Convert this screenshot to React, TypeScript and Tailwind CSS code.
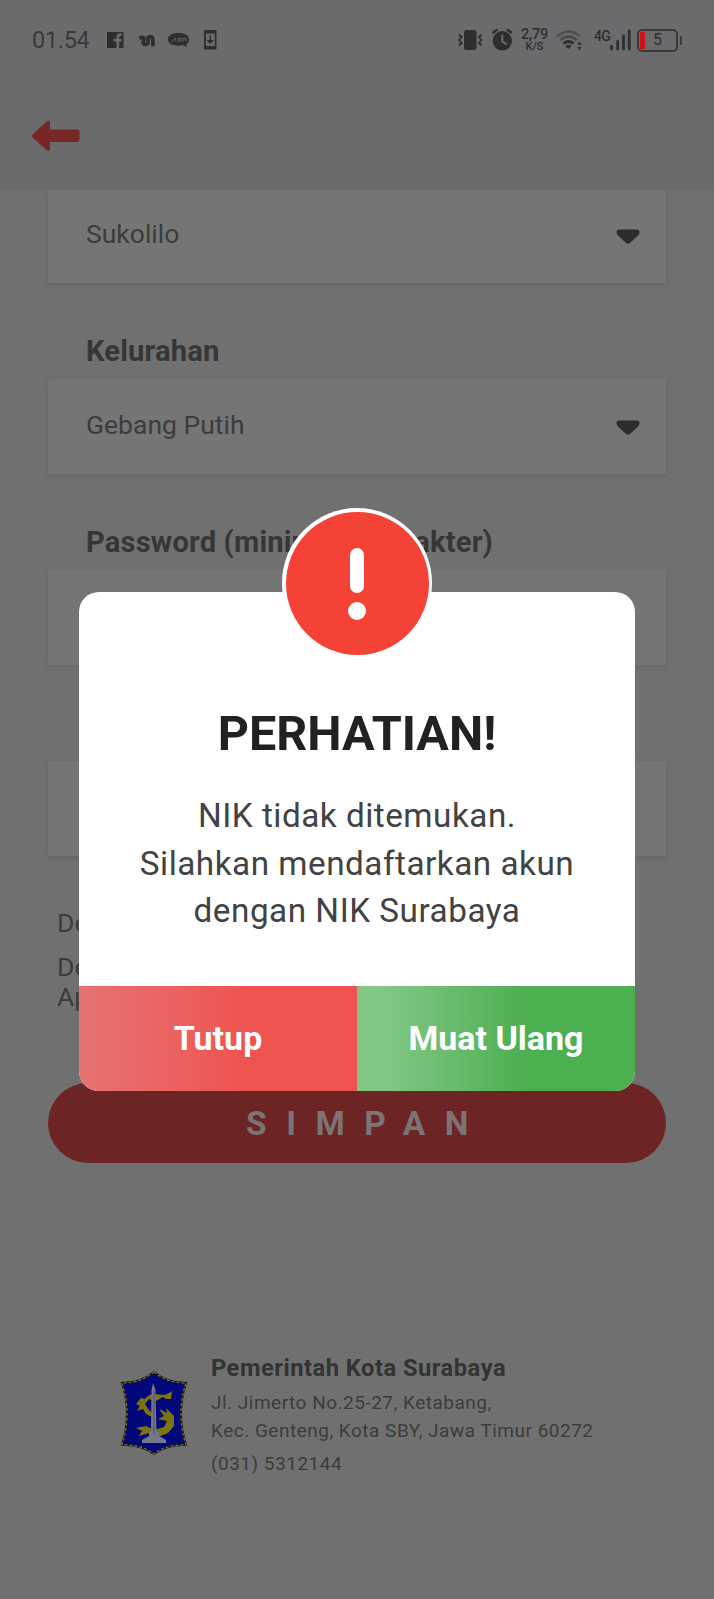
import React from "react";

function StatusBar() {
  return (
    <div className="flex h-[80px] items-center text-[#2e2e30]">
      <span className="ml-[32px] w-[75px] pt-[2px] text-[23.500px] tracking-[-0.300px] text-[#3a3a3c]">01.54</span>
      <svg className="h-[30px] w-[120px]" viewBox="107 25 120 30">
        <rect x="107" y="32" width="16.500" height="16" fill="currentColor" />
        <path d="M116.500 48V41.500H113.500V39H116.500V37Q116.500 33.300 120 33.300H121.500V36H120.500Q119.200 36 119.200 37.500V39H121.500V41.500H119.200V48Z" fill="#6b6b6d" />
        <path d="M139.300 38.300Q145 36 143.700 40Q142.300 44.500 145.200 44.500Q148.500 44.500 148 40.500Q147.500 36.500 150.300 36.500Q153 36.500 152.900 41V46.300" fill="none" stroke="currentColor" strokeWidth="3.700" />
        <path d="M178.500 33C185 33 189 35.500 189 39.500C189 42 188 43.500 186.500 44.200L186.500 47L183 45.300C175 46.500 168 44.500 168 39.500C168 35.500 172 33 178.500 33Z" fill="currentColor" />
        <path d="M172 41.500L175.500 38L176 41.500M178.500 38.500V41.200H181V38.500ZM183 41.500V38.500H186V41.500" fill="none" stroke="#68686b" strokeWidth="1" />
        <rect x="204" y="30" width="12.500" height="19.500" rx="1" fill="currentColor" />
        <rect x="205.800" y="33.500" width="9" height="12.500" fill="#6b6b6d" />
        <path d="M210.300 35V42M208.200 40.800L210.300 43L212.400 40.800Z" stroke="currentColor" strokeWidth="1.400" fill="currentColor" />
      </svg>
      <svg className="ml-[229px] h-[40px] w-[60px]" viewBox="456 20 60 40">
        <rect x="464" y="30" width="12.500" height="20" rx="2.500" fill="currentColor" />
        <path d="M459 34.500L461.500 37L459 40L461.500 43L459 45.500M481.500 34.500L479 37L481.500 40L479 43L481.500 45.500" fill="none" stroke="currentColor" strokeWidth="1.800" />
        <circle cx="502.300" cy="40.800" r="9.700" fill="currentColor" />
        <path d="M492.500 33L497.500 29.500M512 33L507 29.500" stroke="currentColor" strokeWidth="2.400" />
        <path d="M502.300 35V41.500L507 44.500" fill="none" stroke="#6b6b6d" strokeWidth="2" />
      </svg>
      <div className="flex w-[36px] flex-col items-center pr-px pl-[2px] text-center font-medium">
        <span className="text-[14.500px] leading-[13px] tracking-[-0.300px]">2,79</span>
        <span className="text-[11px] leading-[11px]">K/S</span>
      </div>
      <svg className="h-[40px] w-[42px]" viewBox="552 20 42 40" fill="none" stroke="currentColor">
        <path d="M557 36.500Q568.500 26.500 580 36.500" strokeWidth="2.500" opacity="0.45" />
        <path d="M560.500 40Q568.500 33 576.500 40" strokeWidth="2.500" opacity="0.6" />
        <path d="M563.500 43.500Q568.500 39.500 573.500 43.500" strokeWidth="2.800" />
        <path d="M565.300 46L568.500 49L571.700 46Q568.500 43.500 565.300 46Z" fill="currentColor" stroke="none" />
        <path d="M577.500 45L579.500 41.500L581.500 45ZM577.500 47L579.500 50.500L581.500 47Z" fill="currentColor" stroke="none" />
      </svg>
      <span className="mb-[9px] w-[15px] text-[14px] leading-none font-medium tracking-[-0.800px]">4G</span>
      <svg className="h-[40px] w-[24px]" viewBox="609 20 24 40" stroke="currentColor" strokeWidth="2.800" strokeLinecap="round">
        <path d="M611.500 46.500V49M617.700 41.500V49M623.500 36V49M629.200 31V49" />
      </svg>
      <div className="ml-[4px] flex h-[23px] w-[41px] items-center rounded-[5px] border-2 border-[#3a3a3c] pl-px">
        <span className="h-[17px] w-[5px] rounded-[1px] bg-[#cf1216]" />
        <span className="ml-[8px] text-[16px] leading-none">5</span>
      </div>
      <span className="ml-[2px] h-[9px] w-[2px] rounded bg-[#3a3a3c]" />
    </div>
  );
}

function Header() {
  return (
    <header className="relative h-[190px] bg-[#6b6b6d]">
      <StatusBar />
      <svg className="mt-[40px] ml-[32px] h-[32px] w-[48px]" viewBox="0 0 48 32" fill="#792626">
        <path d="M1 14L14.500 1.500Q18 -0.500 18 3V9.500H45Q47.500 9.500 47.500 12V19.500Q47.500 22 45 22H18V28.500Q18 32 14.500 30L1 18Q-1 16 1 14Z" />
      </svg>
    </header>
  );
}

function Caret() {
  return (
    <svg className="mt-[2px] h-[16px] w-[24px]" viewBox="0 0 24 16" fill="#2d2d2d">
      <path d="M3 0.500H21Q23.500 0.500 23.500 3Q23.500 5 22 6.500L14.500 13.500Q12 16 9.500 13.500L2 6.500Q0.500 5 0.500 3Q0.500 0.500 3 0.500Z" />
    </svg>
  );
}

function Field({ value }: { value?: string }) {
  return (
    <div className="flex h-[95px] items-center justify-between bg-[#757575] pr-[26px] pl-[38px] shadow-[0_2px_5px_rgba(0,0,0,0.1)]">
      {value && <span className="pb-[3px] text-[26.500px] text-[#3c3c3c]">{value}</span>}
      {value && <Caret />}
    </div>
  );
}

function Label({ children }: { children?: React.ReactNode }) {
  return (
    <div className="flex h-[96px] items-end pb-[9px] pl-[38px] text-[29.200px] font-bold tracking-[0.150px] text-[#363636]">
      <span className="leading-[37px]">{children}</span>
    </div>
  );
}

function Emblem() {
  return (
    <svg className="h-[86px] w-[68px]" viewBox="0 0 68 86">
      <path d="M34 2Q47 13 66 13Q56 43 66 75Q47 74 34 84Q21 74 2 75Q12 43 2 13Q21 13 34 2Z" fill="#02077c" stroke="#17170f" strokeWidth="2" />
      <path d="M34 2Q47 13 66 13Q56 43 66 75Q47 74 34 84Q21 74 2 75Q12 43 2 13Q21 13 34 2Z" fill="none" stroke="#77733e" strokeWidth="1.200" strokeDasharray="3 2" />
      <path d="M52 21L51 29L46 29L43 27L36 31L29 29L25 34L28 39L32 43V47L26 44L23 39L17 41L20 36L16 34L21 28L25 29L29 25L35 24L45 25L49 23Z" fill="#7d7410" />
      <path d="M39 39L47 43L46 38L54 46L54 56L48 63L38 67L29 63L19 66L22 61L16 58L26 56L34 60L44 57L47 51L38 49L44 46Z" fill="#7d7410" />
      <path d="M33 13L35.500 20L36.500 62H39V66L46 70V73H22V70L29 66V62H31L31.500 20Z" fill="#77778a" />
      <path d="M34 20V64" stroke="#4b4b74" strokeWidth="1" />
    </svg>
  );
}

function Footer() {
  return (
    <footer className="mt-[190px] flex pl-[119.500px] text-[#3c3c3c]">
      <div className="pt-[17px]">
        <Emblem />
      </div>
      <div className="ml-[23.500px] flex flex-col whitespace-nowrap tracking-[0.500px]">
        <span className="text-[23.700px] leading-[30px] font-bold text-[#333]">Pemerintah Kota Surabaya</span>
        <span className="mt-[6px] text-[19px] leading-[28px]">Jl. Jimerto No.25-27, Ketabang,</span>
        <span className="text-[19px] leading-[28px]">Kec. Genteng, Kota SBY, Jawa Timur 60272</span>
        <span className="mt-[5px] text-[19px] leading-[28px]">(031) 5312144</span>
      </div>
    </footer>
  );
}

function AlertDialog() {
  return (
    <div role="dialog" className="absolute top-[592px] left-[79px] h-[499px] w-[556px]">
      <div className="flex h-full flex-col overflow-hidden rounded-[20px] bg-white text-center">
        <h1 className="mt-[113px] text-[48.500px] leading-[58px] font-bold text-[#212121]">PERHATIAN!</h1>
        <p className="mt-[29px] text-[33.300px] leading-[47.500px] tracking-[0.500px] text-[#424242]">
          NIK tidak ditemukan.
          <br />
          Silahkan mendaftarkan akun
          <br />
          dengan NIK Surabaya
        </p>
        <div className="mt-auto grid h-[105px] grid-cols-2 text-[34px] font-bold text-white">
          <button className="bg-linear-to-r from-[#e57373] to-[#ef5350] to-60%">Tutup</button>
          <button className="bg-linear-to-r from-[#81c784] from-10% to-[#4caf50] to-60%">Muat Ulang</button>
        </div>
      </div>
      <div className="absolute top-[-84px] left-[203px] flex h-[150px] w-[150px] items-end justify-center rounded-full bg-white pb-[3px]">
        <div className="flex h-[143px] w-[143px] flex-col items-center rounded-full bg-[#f44336] pt-[36px]">
          <span className="h-[45px] w-[14px] rounded-full bg-white" />
          <span className="mt-[9px] h-[18px] w-[18px] rounded-full bg-white" />
        </div>
      </div>
    </div>
  );
}

export default function App() {
  return (
    <div className="relative h-[1599px] w-[714px] overflow-hidden bg-[#707070] font-['Roboto',sans-serif]">
      <Header />
      <main className="-mt-[2px] px-[48px]">
        <Field value="Sukolilo" />
        <Label>Kelurahan</Label>
        <Field value="Gebang Putih" />
        <Label>Password (minimal 6 karakter)</Label>
        <Field />
        <Label />
        <Field />
        <div className="h-[227px] pt-[52px] pl-[9px] text-[26.500px] leading-[30px] text-[#3c3c3c]">
          <p>De</p>
          <p className="mt-[14px]">De</p>
          <p>Ap</p>
        </div>
        <button className="flex h-[80px] w-full items-center justify-center rounded-full bg-[#6d2424] pt-[3px] pl-[20px] text-[33.500px] font-bold tracking-[19.500px] text-[#7c7474]">
          SIMPAN
        </button>
      </main>
      <Footer />
      <AlertDialog />
    </div>
  );
}
